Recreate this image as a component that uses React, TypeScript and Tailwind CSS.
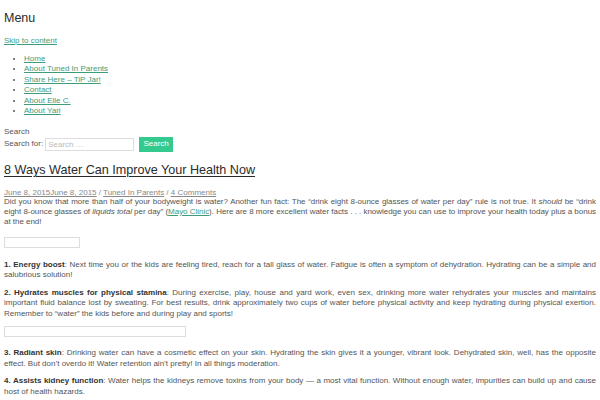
import React from "react";

const green = "text-[#3f9c7a]";

export default function App() {
  return (
    <div className="bg-white w-[600px] h-[400px] overflow-hidden px-[4px] text-[#555] text-[8px] leading-[10.5px]" style={{ fontFamily: '"Liberation Sans", Arial, sans-serif' }}>
      <div className="pt-[10px] text-[12.5px] leading-[16px] text-[#2a2a2a] font-medium">Menu</div>
      <div className="mt-[10px]">
        <a href="#" className={`${green} underline`}>Skip to content</a>
      </div>
      <ul className="mt-[7px] pl-[20px] list-disc">
        {["Home", "About Tuned In Parents", "Share Here – TiP Jar!", "Contact", "About Elle C.", "About Yari"].map((t) => (
          <li key={t} className="marker:text-[#555]">
            <a href="#" className={`${green} underline`}>{t}</a>
          </li>
        ))}
      </ul>
      <div className="mt-[10px]">Search</div>
      <div className="flex items-center gap-[2px]">
        <span>Search for:</span>
        <input className="w-[89px] h-[13px] border border-[#ddd] text-[8px] px-[2px] placeholder:text-[#bbb]" placeholder="Search …" />
        <button className="ml-[3px] w-[34px] h-[15px] bg-[#34c98e] text-white text-[8px]">Search</button>
      </div>
      <h1 className="mt-[10px] text-[12.6px] leading-[16px] text-[#2a2a2a] font-normal underline decoration-1 underline-offset-2">8 Ways Water Can Improve Your Health Now</h1>
      <div className="mt-[11px] leading-[7.5px] text-[#888]">
        <a href="#" className="underline">June 8, 2015June 8, 2015</a> / <a href="#" className="underline">Tuned In Parents</a> / <a href="#" className="underline">4 Comments</a>
      </div>
      <p className="text-justify leading-[10.4px] tracking-[-0.03px]">
        Did you know that more than half of your bodyweight is water? Another fun fact: The “drink eight 8-ounce glasses of water per day” rule is not true. It <i>should</i> be “drink eight 8-ounce glasses of <i>liquids total</i> per day” (<a href="#" className={`${green} underline`}>Mayo Clinic</a>). Here are 8 more excellent water facts . . . knowledge you can use to improve your health today plus a bonus at the end!
      </p>
      <div className="mt-[9px] w-[76px] h-[11px] border border-[#ddd]"></div>
      <p className="mt-[12px] text-justify">
        <b className="text-[#333]">1. Energy boost</b>: Next time you or the kids are feeling tired, reach for a tall glass of water. Fatigue is often a symptom of dehydration. Hydrating can be a simple and salubrious solution!
      </p>
      <p className="mt-[7px] text-justify">
        <b className="text-[#333]">2. Hydrates muscles for physical stamina</b>: During exercise, play, house and yard work, even sex, drinking more water rehydrates your muscles and maintains important fluid balance lost by sweating. For best results, drink approximately two cups of water before physical activity and keep hydrating during physical exertion. Remember to “water” the kids before and during play and sports!
      </p>
      <div className="mt-[7px] w-[182px] h-[11px] border border-[#ddd]"></div>
      <p className="mt-[11px] text-justify">
        <b className="text-[#333]">3. Radiant skin</b>: Drinking water can have a cosmetic effect on your skin. Hydrating the skin gives it a younger, vibrant look. Dehydrated skin, well, has the opposite effect. But don’t overdo it! Water retention ain’t pretty! In all things moderation.
      </p>
      <p className="mt-[7px] text-justify">
        <b className="text-[#333]">4. Assists kidney function</b>: Water helps the kidneys remove toxins from your body — a most vital function. Without enough water, impurities can build up and cause host of health hazards.
      </p>
    </div>
  );
}
